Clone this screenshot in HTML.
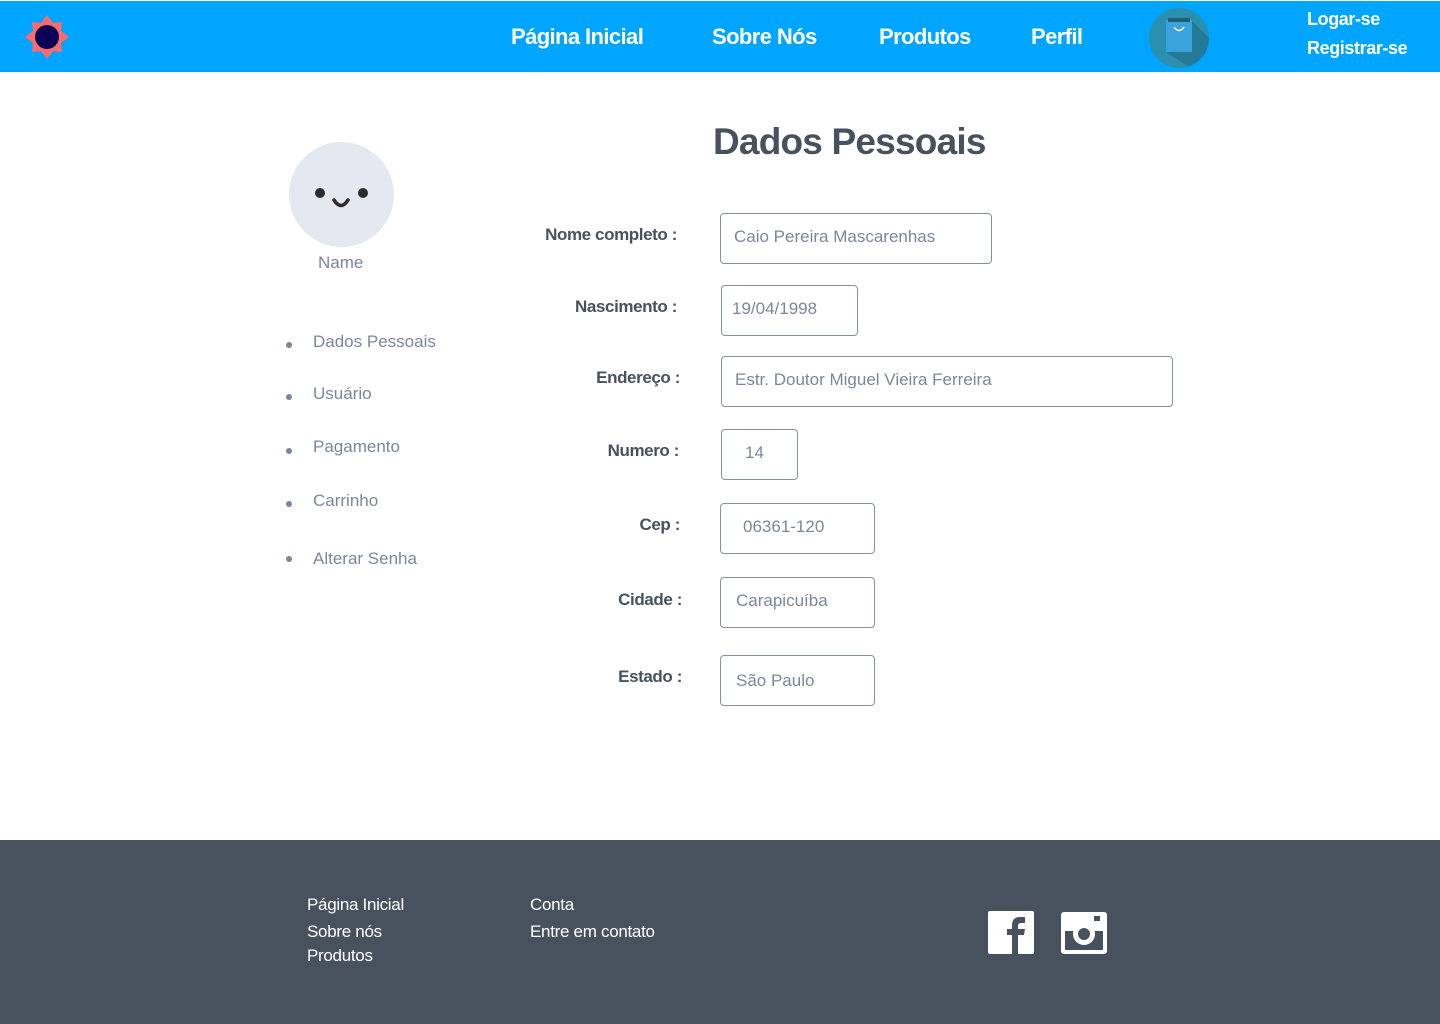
<!DOCTYPE html>
<html><head><meta charset="utf-8"><style>
*{margin:0;padding:0;box-sizing:border-box}
body{width:1440px;height:1024px;position:relative;background:#fff;font-family:"Liberation Sans",sans-serif;overflow:hidden}
.a{position:absolute;white-space:nowrap}
.hdr{position:absolute;left:0;top:1px;width:1440px;height:71px;background:#00a5ff}
.nav{color:#fff;font-weight:bold;font-size:22px;letter-spacing:-0.6px;top:24px}
.lbl{color:#48525e;font-weight:bold;font-size:17px;letter-spacing:-0.4px;text-align:right;width:200px}
.inp{position:absolute;border:1px solid #8590a3;border-radius:4px;height:51px;color:#7a879b;font-size:17px;line-height:46px;padding-left:13px;white-space:nowrap}
.li{color:#7a879b;font-size:17px;left:313px}
.dot{position:absolute;left:286px;width:6px;height:6px;border-radius:50%;background:#7a879b}
.ft{color:#fff;font-size:17px;letter-spacing:-0.3px}
</style></head><body>
<div class="hdr"></div>
<svg class="a" style="left:24px;top:14px" width="46" height="46" viewBox="0 0 46 46">
<polygon points="23,1 29,9 38,8 37,17 45,23 37,29 38,38 29,37 23,45 17,37 8,38 9,29 1,23 9,17 8,8 17,9" fill="#ff6b6b"/>
<circle cx="23" cy="23" r="12" fill="#0c0056"/>
</svg>
<div class="a nav" style="left:511px">Página Inicial</div>
<div class="a nav" style="left:712px">Sobre Nós</div>
<div class="a nav" style="left:879px">Produtos</div>
<div class="a nav" style="left:1031px">Perfil</div>
<svg class="a" style="left:1148px;top:7px" width="62" height="62" viewBox="0 0 62 62">
<defs><clipPath id="c"><circle cx="31" cy="31" r="30"/></clipPath></defs>
<circle cx="31" cy="31" r="30" fill="#2b8fb0"/>
<polygon clip-path="url(#c)" points="44,14 62,32 62,62 44,62 18,45 44,45" fill="#247a96"/>
<rect x="18" y="13" width="26" height="32" fill="#3aa3dc"/>
<rect x="20" y="11" width="22" height="4" fill="#1f5f75"/>
<path d="M26 20 q5 7 10 0" stroke="#fff" stroke-width="1.5" fill="none"/>
</svg>
<div class="a" style="left:1307px;top:9px;color:#fff;font-weight:bold;font-size:18px;letter-spacing:-0.4px">Logar-se</div>
<div class="a" style="left:1307px;top:38px;color:#fff;font-weight:bold;font-size:18px;letter-spacing:-0.4px">Registrar-se</div>

<svg class="a" style="left:289px;top:142px" width="105" height="105" viewBox="0 0 105 105">
<circle cx="52.5" cy="52.5" r="52.5" fill="#e4e8f1"/>
<circle cx="31" cy="51" r="5" fill="#2c2c2c"/>
<circle cx="74" cy="51" r="5" fill="#2c2c2c"/>
<path d="M45 58 q7 11 14 0" stroke="#2c2c2c" stroke-width="3.5" fill="none" stroke-linecap="round"/>
</svg>
<div class="a" style="left:318px;top:253px;color:#7a879b;font-size:17px">Name</div>

<div class="dot" style="top:342px"></div><div class="a li" style="top:332px">Dados Pessoais</div>
<div class="dot" style="top:394px"></div><div class="a li" style="top:384px">Usuário</div>
<div class="dot" style="top:448px"></div><div class="a li" style="top:437px">Pagamento</div>
<div class="dot" style="top:501px"></div><div class="a li" style="top:491px">Carrinho</div>
<div class="dot" style="top:556px"></div><div class="a li" style="top:549px">Alterar Senha</div>

<div class="a" style="left:713px;top:121px;color:#48525e;font-weight:bold;font-size:37px;letter-spacing:-0.8px">Dados Pessoais</div>

<div class="a lbl" style="left:477px;top:225px">Nome completo :</div>
<div class="inp" style="left:720px;top:213px;width:272px">Caio Pereira Mascarenhas</div>
<div class="a lbl" style="left:477px;top:297px">Nascimento :</div>
<div class="inp" style="left:721px;top:285px;width:137px;padding-left:10px">19/04/1998</div>
<div class="a lbl" style="left:480px;top:368px">Endereço :</div>
<div class="inp" style="left:721px;top:356px;width:452px">Estr. Doutor Miguel Vieira Ferreira</div>
<div class="a lbl" style="left:479px;top:441px">Numero :</div>
<div class="inp" style="left:721px;top:429px;width:77px;padding-left:23px">14</div>
<div class="a lbl" style="left:480px;top:515px">Cep :</div>
<div class="inp" style="left:720px;top:503px;width:155px;padding-left:22px">06361-120</div>
<div class="a lbl" style="left:482px;top:590px">Cidade :</div>
<div class="inp" style="left:720px;top:577px;width:155px;padding-left:15px">Carapicuíba</div>
<div class="a lbl" style="left:482px;top:667px">Estado :</div>
<div class="inp" style="left:720px;top:655px;width:155px;padding-left:15px;line-height:50px">São Paulo</div>

<div class="a" style="left:0;top:840px;width:1440px;height:184px;background:#48525e"></div>
<div class="a ft" style="left:307px;top:895px">Página Inicial</div>
<div class="a ft" style="left:307px;top:922px">Sobre nós</div>
<div class="a ft" style="left:307px;top:946px">Produtos</div>
<div class="a ft" style="left:530px;top:895px">Conta</div>
<div class="a ft" style="left:530px;top:922px">Entre em contato</div>
<svg class="a" style="left:988px;top:911px" width="46" height="43" viewBox="0 0 46 43">
<rect width="46" height="43" rx="2" fill="#fff"/>
<path d="M24 43 V24 H19 V18 H24 V14 Q24 6 32 6 H37 V12 H33 Q30 12 30 15 V18 H37 L36 24 H30 V43 Z" fill="#48525e"/>
</svg>
<svg class="a" style="left:1061px;top:912px" width="46" height="42" viewBox="0 0 46 42">
<rect width="46" height="42" rx="3" fill="#fff"/>
<rect x="4" y="16" width="38" height="22" fill="#48525e"/>
<rect x="4" y="16" width="38" height="3" fill="#fff"/>
<circle cx="23" cy="22" r="11" fill="#fff"/>
<circle cx="23" cy="22" r="6" fill="#48525e"/>
<rect x="33" y="4" width="6" height="5" fill="#48525e"/>
</svg>
</body></html>
